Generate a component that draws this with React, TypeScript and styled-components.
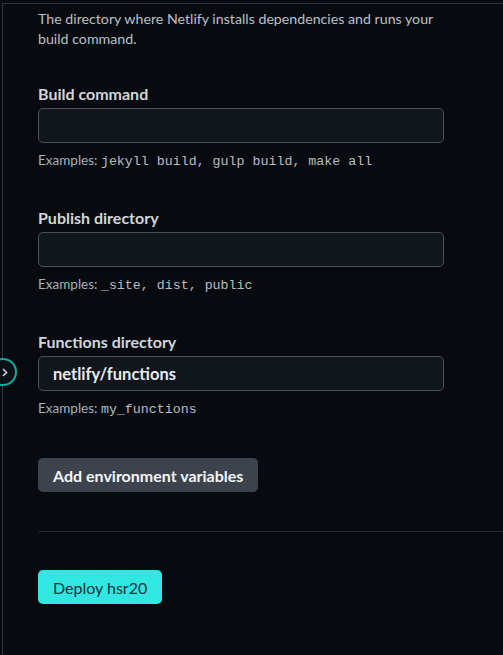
import React from "react";
import styled, { createGlobalStyle } from "styled-components";

const Global = createGlobalStyle`
  html, body { margin: 0; padding: 0; background: #070b10; }
  body { width: 503px; height: 655px; overflow: hidden; font-family: Lato, "Noto Sans", sans-serif; }
`;

const Page = styled.div`
  position: relative;
  height: 655px;
  padding: 3px 0 0 2px;
  box-sizing: border-box;
  background: #070b10;
`;

const Panel = styled.div`
  border-left: 1px solid #2f353c;
  border-top: 1px solid #2f353c;
  height: 100%;
  box-sizing: border-box;
  padding: 5px 0 0 35px;
  display: flex;
  flex-direction: column;
`;

const Intro = styled.p`
  margin: 0;
  width: 400px;
  font-size: 14.2px;
  line-height: 20px;
  color: #b9c0c8;
`;

const Field = styled.div<{ $gap: number }>`
  display: flex;
  flex-direction: column;
  width: 406px;
  margin-top: ${(p) => p.$gap}px;
`;

const Label = styled.label`
  font-size: 16px;
  font-weight: 700;
  line-height: 20px;
  color: #d0d6dc;
  margin-bottom: 4px;
`;

const Input = styled.input`
  box-sizing: border-box;
  height: 35px;
  width: 406px;
  border: 1px solid #4a5159;
  border-radius: 5px;
  background: #11161d;
  color: #e6ebf0;
  font-family: Lato, "Noto Sans", sans-serif;
  font-size: 16.5px;
  font-weight: 700;
  padding: 0 14px;
  outline: none;
`;

const Hint = styled.div`
  margin-top: 8px;
  font-size: 13.5px;
  line-height: 18px;
  color: #a9b0b8;
`;

const Code = styled.code`
  font-family: "Liberation Mono", "Courier New", monospace;
  font-size: 13.3px;
  color: #b7bdc4;
`;

const GrayButton = styled.button`
  align-self: flex-start;
  margin-top: 39px;
  height: 34px;
  padding: 0 15px;
  border: none;
  border-radius: 5px;
  background: #3c434c;
  color: #f4f6f8;
  font-family: Lato, "Noto Sans", sans-serif;
  font-size: 16px;
  font-weight: 700;
`;

const Divider = styled.hr`
  margin: 39px 0 0 0;
  border: none;
  border-top: 1px solid #23282e;
`;

const PrimaryButton = styled.button`
  align-self: flex-start;
  margin-top: 38px;
  height: 34px;
  padding: 0 15px;
  border: none;
  border-radius: 5px;
  background: #32e6e2;
  color: #163036;
  font-family: Lato, "Noto Sans", sans-serif;
  font-size: 16px;
  font-weight: 400;
`;

const Toggle = styled.div`
  position: absolute;
  left: -11px;
  top: 358px;
  width: 24px;
  height: 24px;
  border-radius: 50%;
  border: 2px solid #16a9a4;
  background: #0b1015;
`;

const ToggleIcon = styled.svg`
  position: absolute;
  left: 11px;
  top: 8px;
`;

export default function App() {
  return (
    <Page>
      <Global />
      <Panel>
        <Intro>
          The directory where Netlify installs dependencies and runs your build command.
        </Intro>
        <Field $gap={35}>
          <Label>Build command</Label>
          <Input defaultValue="" />
          <Hint>
            Examples: <Code>jekyll build, gulp build, make all</Code>
          </Hint>
        </Field>
        <Field $gap={37}>
          <Label>Publish directory</Label>
          <Input defaultValue="" />
          <Hint>
            Examples: <Code>_site, dist, public</Code>
          </Hint>
        </Field>
        <Field $gap={37}>
          <Label>Functions directory</Label>
          <Input defaultValue="netlify/functions" />
          <Hint>
            Examples: <Code>my_functions</Code>
          </Hint>
        </Field>
        <GrayButton>Add environment variables</GrayButton>
        <Divider />
        <PrimaryButton>Deploy hsr20</PrimaryButton>
      </Panel>
      <Toggle>
        <ToggleIcon width="6" height="9" viewBox="0 0 6 9">
          <path d="M1 1l3.5 3.5L1 8" fill="none" stroke="#c9d1d9" strokeWidth="1.6" />
        </ToggleIcon>
      </Toggle>
    </Page>
  );
}
